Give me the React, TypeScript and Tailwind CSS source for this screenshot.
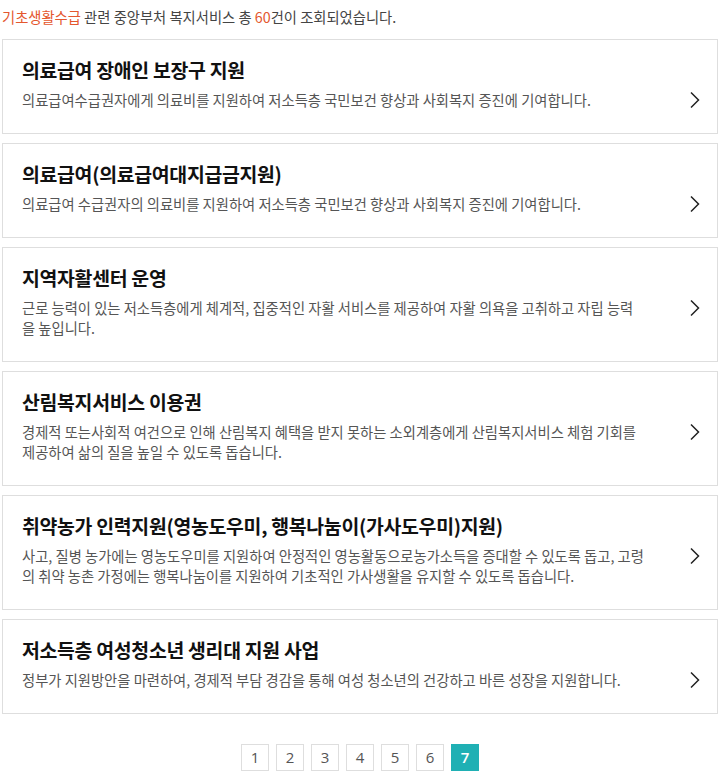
import React from "react";

const items = [
  {
    title: "의료급여 장애인 보장구 지원",
    desc: "의료급여수급권자에게 의료비를 지원하여 저소득층 국민보건 향상과 사회복지 증진에 기여합니다.",
  },
  {
    title: "의료급여(의료급여대지급금지원)",
    desc: "의료급여 수급권자의 의료비를 지원하여 저소득층 국민보건 향상과 사회복지 증진에 기여합니다.",
  },
  {
    title: "지역자활센터 운영",
    desc: "근로 능력이 있는 저소득층에게 체계적, 집중적인 자활 서비스를 제공하여 자활 의욕을 고취하고 자립 능력을 높입니다.",
  },
  {
    title: "산림복지서비스 이용권",
    desc: "경제적 또는사회적 여건으로 인해 산림복지 혜택을 받지 못하는 소외계층에게 산림복지서비스 체험 기회를 제공하여 삶의 질을 높일 수 있도록 돕습니다.",
  },
  {
    title: "취약농가 인력지원(영농도우미, 행복나눔이(가사도우미)지원)",
    desc: "사고, 질병 농가에는 영농도우미를 지원하여 안정적인 영농활동으로농가소득을 증대할 수 있도록 돕고, 고령의 취약 농촌 가정에는 행복나눔이를 지원하여 기초적인 가사생활을 유지할 수 있도록 돕습니다.",
  },
  {
    title: "저소득층 여성청소년 생리대 지원 사업",
    desc: "정부가 지원방안을 마련하여, 경제적 부담 경감을 통해 여성 청소년의 건강하고 바른 성장을 지원합니다.",
  },
];

function Chevron() {
  return (
    <svg width="12" height="18" viewBox="0 0 12 18" className="mt-[1px] shrink-0">
      <path d="M2 1.5 L9.5 9 L2 16.5" fill="none" stroke="#222" strokeWidth="1.5" />
    </svg>
  );
}

export default function App() {
  return (
    <div className="min-h-[781px] bg-white px-[2px] pt-[7px] font-['Malgun_Gothic','Noto_Sans_CJK_KR',sans-serif] text-[#444]">
      <p className="text-[14.3px] leading-[20px]">
        <span className="text-[#e4572e]">기초생활수급</span> 관련 중앙부처 복지서비스 총{" "}
        <span className="text-[#e4572e]">60</span>건이 조회되었습니다.
      </p>

      <ul className="mt-[12px] flex flex-col gap-[9px]">
        {items.map((item) => (
          <li
            key={item.title}
            className="border border-[#dedede] bg-white pb-[23px] pl-[19px] pr-[16px] pt-[18px]"
          >
            <h3 className="text-[19.4px] font-bold leading-[24px] tracking-[-0.3px] text-[#111]">
              {item.title}
            </h3>
            <div className="mt-[8px] flex items-start justify-between">
              <p className="w-[622px] text-[14.3px] leading-[20px] text-[#555]">{item.desc}</p>
              <Chevron />
            </div>
          </li>
        ))}
      </ul>

      <nav className="mt-[30px] flex justify-center gap-[7px] font-['Open_Sans',sans-serif]">
        {[1, 2, 3, 4, 5, 6, 7].map((n) => (
          <span
            key={n}
            className={
              n === 7
                ? "flex h-[27px] w-[28px] items-center justify-center border border-[#1fb0b4] bg-[#1fb0b4] text-[15px] font-semibold text-white"
                : "flex h-[27px] w-[28px] items-center justify-center border border-[#dedede] bg-white text-[15px] text-[#555]"
            }
          >
            {n}
          </span>
        ))}
      </nav>
    </div>
  );
}
